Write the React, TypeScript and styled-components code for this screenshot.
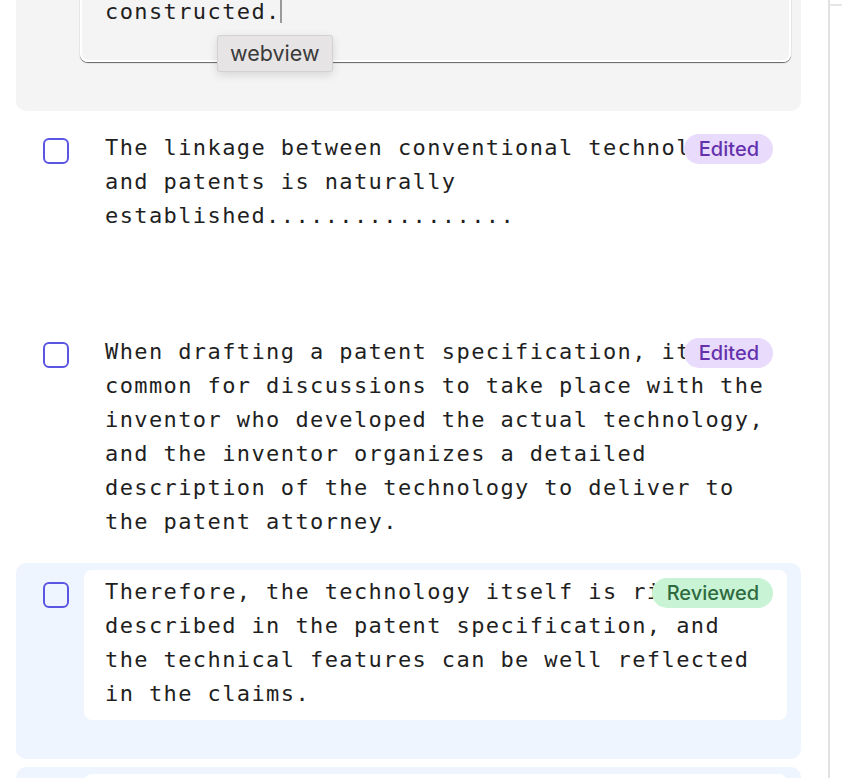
import styled, {createGlobalStyle} from "styled-components";

const GlobalStyle = createGlobalStyle`
  html, body {
    margin: 0;
    padding: 0;
    background: #ffffff;
    overflow: hidden;
  }
`;

type Tone = "editing" | "plain" | "selected";
type BadgeKind = "edited" | "reviewed";

const toneBg: Record<Tone, string> = {
    editing: "#f4f4f4",
    plain: "transparent",
    selected: "#eef5fe",
};

const badgeColors: Record<BadgeKind, { bg: string, fg: string }> = {
    edited: {bg: "#e9dbfc", fg: "#6431ad"},
    reviewed: {bg: "#c8f4d5", fg: "#2f6a3f"},
};

const Layout = styled.div`
  display: flex;
  height: 100vh;
  overflow: hidden;
`;

const Main = styled.main`
  flex: 1;
  padding: 0 27px 0 16px;
`;

const Sidebar = styled.aside`
  width: 12px;
  border-left: 2px solid #e2e2e2;
`;

const SidebarRule = styled.div`
  margin-top: 4px;
  height: 2px;
  background: #e6e6e6;
`;

const SegmentList = styled.div`
  display: flex;
  flex-direction: column;
  gap: 8px;
  margin-top: -85px;
`;

const Card = styled.section<{ $tone: Tone }>`
  display: flex;
  align-items: flex-start;
  gap: 15px;
  box-sizing: border-box;
  min-height: 196px;
  padding: 7px 14px 7px 27px;
  border-radius: 10px;
  background: ${p => toneBg[p.$tone]};
`;

const Check = styled.input.attrs({type: "checkbox"})`
  appearance: none;
  flex: none;
  width: 26px;
  height: 26px;
  margin: 12px 0 0;
  box-sizing: border-box;
  border: 2px solid #5b55e3;
  border-radius: 6px;
  background: transparent;
`;

const SegmentBody = styled.div`
  position: relative;
  flex: 1;
  padding: 5px 16px 9px 21px;
  border-radius: 8px;
  background: #ffffff;
`;

const SegmentText = styled.p`
  margin: 0;
  font-family: "DejaVu Sans Mono", "Liberation Mono", monospace;
  font-size: 22px;
  line-height: 34px;
  letter-spacing: 1.4px;
  color: #1f1f1f;
`;

const Badge = styled.span<{ $kind: BadgeKind }>`
  position: absolute;
  top: 8px;
  right: 14px;
  height: 30px;
  padding: 0 14px 0 15px;
  border-radius: 15px;
  font-family: Inter, "Noto Sans", sans-serif;
  font-size: 20px;
  font-weight: 500;
  line-height: 30px;
  background: ${p => badgeColors[p.$kind].bg};
  color: ${p => badgeColors[p.$kind].fg};
`;

const Editor = styled.div`
  position: relative;
  flex: 1;
  height: 140px;
  margin: 0 -4px;
  box-sizing: border-box;
  padding: 3px 23px;
  border: 2px solid #ffffff;
  border-radius: 8px;
  box-shadow: 0 1px 1px rgba(0, 0, 0, 0.6);
  white-space: pre-wrap;
  font-family: "DejaVu Sans Mono", "Liberation Mono", monospace;
  font-size: 22px;
  line-height: 34px;
  letter-spacing: 1.4px;
  color: #1f1f1f;
`;

const Caret = styled.span`
  display: inline-block;
  width: 2px;
  height: 25px;
  margin-left: -1px;
  vertical-align: -4px;
  background: #9a9a9a;
`;

const Tooltip = styled.div`
  position: absolute;
  left: 135px;
  top: 111px;
  height: 37px;
  box-sizing: border-box;
  padding: 0 12px 0 12px;
  border: 1px solid #d2d2d2;
  border-radius: 3px;
  background: #e6e4e4;
  box-shadow: 0 3px 10px rgba(0, 0, 0, 0.12);
  font-family: Inter, "Noto Sans", sans-serif;
  font-size: 21.5px;
  line-height: 35px;
  letter-spacing: 0;
  color: #3a3a3a;
  white-space: nowrap;
`;

type Segment = {
    id: number,
    text: string,
    tone: Tone,
    badge?: BadgeKind,
};

const segments: Segment[] = [
    {
        id: 2,
        text: "The linkage between conventional technology and patents is naturally established.................",
        tone: "plain",
        badge: "edited",
    },
    {
        id: 3,
        text: "When drafting a patent specification, it is common for discussions to take place with the inventor who developed the actual technology, and the inventor organizes a detailed description of the technology to deliver to the patent attorney.",
        tone: "plain",
        badge: "edited",
    },
    {
        id: 4,
        text: "Therefore, the technology itself is richly described in the patent specification, and the technical features can be well reflected in the claims.",
        tone: "selected",
        badge: "reviewed",
    },
    {
        id: 5,
        text: "However, a patent is not merely a description of technology.",
        tone: "selected",
    },
];

const labelFor = (kind: BadgeKind) => kind === "edited" ? "Edited" : "Reviewed";

const App = () => {
    return (
        <>
            <GlobalStyle/>
            <Layout>
                <Main>
                    <SegmentList>
                        <Card $tone="editing">
                            <Check aria-label="Select segment 1"/>
                            <Editor role="textbox" aria-multiline="true">
                                {"In this process, the technical idea is\nclarified and the structure of the claims is\nconstructed."}
                                <Caret/>
                                <Tooltip>webview</Tooltip>
                            </Editor>
                        </Card>
                        {segments.map(segment => (
                            <Card key={segment.id} $tone={segment.tone}>
                                <Check aria-label={`Select segment ${segment.id}`}/>
                                <SegmentBody>
                                    <SegmentText>{segment.text}</SegmentText>
                                    {segment.badge
                                        ? (<Badge $kind={segment.badge}>{labelFor(segment.badge)}</Badge>)
                                        : null}
                                </SegmentBody>
                            </Card>
                        ))}
                    </SegmentList>
                </Main>
                <Sidebar>
                    <SidebarRule/>
                </Sidebar>
            </Layout>
        </>
    );
}

export default App;
